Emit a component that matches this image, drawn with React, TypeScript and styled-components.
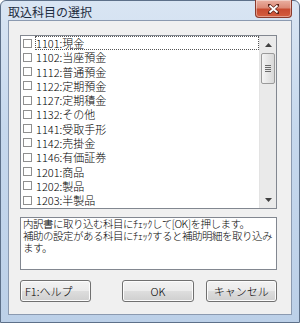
import React from "react";
import styled, { createGlobalStyle } from "styled-components";

const GlobalStyle = createGlobalStyle`
  html, body {
    margin: 0;
    padding: 0;
    background: #ffffff;
  }
  * {
    box-sizing: border-box;
  }
`;

const uiFont = `"Noto Sans CJK JP", sans-serif`;

const Window = styled.div`
  width: 300px;
  height: 323px;
  display: flex;
  flex-direction: column;
  padding: 0 7px 7px;
  border: 1px solid #5d7089;
  border-radius: 6px 6px 0 0;
  background: linear-gradient(180deg, #d9e5f3 0%, #c6d8ed 40%, #bcd0e8 100%);
  font-family: ${uiFont};
  font-size: 11px;
  font-weight: 300;
  color: #000;
`;

const TitleBar = styled.div`
  height: 21px;
  display: flex;
  align-items: flex-start;
  justify-content: space-between;
`;

const Title = styled.div`
  padding: 3px 0 0 0;
  font-size: 12px;
  font-weight: 400;
  line-height: 16px;
  color: #1e2d40;
`;

const CloseButton = styled.div`
  width: 37px;
  height: 18px;
  margin-top: -1px;
  display: flex;
  align-items: center;
  justify-content: center;
  border: 1px solid #8a3a2c;
  border-top: none;
  border-radius: 0 0 4px 4px;
  background: linear-gradient(180deg, #eab0a2 0%, #dc8a77 45%, #c84b31 55%, #d45d3e 100%);
  box-shadow: inset 0 0 0 1px rgba(255, 255, 255, 0.4);
`;

const Client = styled.div`
  flex: 1;
  display: flex;
  flex-direction: column;
  padding: 14px 14px 12px 11px;
  background: #f0f0f0;
  border: 1px solid #8b9ab0;
`;

const ListBox = styled.div`
  height: 174px;
  display: flex;
  background: #fff;
  border: 1px solid #828790;
  overflow: hidden;
`;

const Items = styled.div`
  flex: 1;
  display: flex;
  flex-direction: column;
  overflow: hidden;
`;

const Row = styled.div`
  height: 14.27px;
  flex: none;
  display: flex;
  align-items: center;
  gap: 3px;
  padding-left: 2px;
`;

const Box = styled.span`
  width: 9px;
  height: 9px;
  flex: none;
  border: 1px solid #8f8f8f;
  background: #fff;
`;

const Label = styled.span<{ focused?: boolean }>`
  flex: 1;
  height: 100%;
  display: flex;
  align-items: center;
  padding-left: 1px;
  line-height: 14px;
  white-space: nowrap;
  outline: ${({ focused }) => (focused ? "1px dotted #555" : "none")};
  outline-offset: -1px;
`;

const ScrollBar = styled.div`
  width: 17px;
  flex: none;
  display: flex;
  flex-direction: column;
  background: #eaeaea;
  border-left: 1px solid #e3e3e3;
`;

const Arrow = styled.div`
  height: 17px;
  display: flex;
  align-items: center;
  justify-content: center;
`;

const Track = styled.div`
  flex: 1;
  padding: 0 1px;
`;

const Thumb = styled.div`
  height: 31px;
  display: flex;
  flex-direction: column;
  align-items: center;
  justify-content: center;
  gap: 1px;
  border: 1px solid #9a9a9a;
  border-radius: 2px;
  background: linear-gradient(90deg, #f4f4f4 0%, #e6e6e6 50%, #d8d8d8 100%);
`;

const Grip = styled.span`
  width: 6px;
  height: 1px;
  background: #6a6a6a;
`;

const Note = styled.div`
  height: 53px;
  margin-top: 8px;
  padding: 0 2px;
  background: #fff;
  border: 1px solid #828790;
  font-size: 10.5px;
  line-height: 12px;
  letter-spacing: -0.5px;
  white-space: nowrap;
  overflow: hidden;
`;

const ButtonRow = styled.div`
  display: flex;
  margin-top: 10px;
  gap: 12px;
`;

const Button = styled.button<{ align?: "left" | "center"; push?: boolean }>`
  width: 73px;
  height: 22px;
  margin-left: ${({ push }) => (push ? "19px" : "0")};
  padding: 0 4px;
  display: flex;
  align-items: center;
  justify-content: ${({ align }) => (align === "left" ? "flex-start" : "center")};
  font-family: ${uiFont};
  font-size: 11px;
  font-weight: 300;
  color: #000;
  border: 1px solid #707070;
  border-radius: 3px;
  background: linear-gradient(180deg, #f2f2f2 0%, #ebebeb 48%, #dddddd 52%, #cfcfcf 100%);
  box-shadow: inset 0 0 0 1px #fcfcfc;
`;

const accounts = [
  "1101:現金",
  "1102:当座預金",
  "1112:普通預金",
  "1122:定期預金",
  "1127:定期積金",
  "1132:その他",
  "1141:受取手形",
  "1142:売掛金",
  "1146:有価証券",
  "1201:商品",
  "1202:製品",
  "1203:半製品",
];

function App() {
  return (
    <>
      <GlobalStyle />
      <Window>
        <TitleBar>
          <Title>取込科目の選択</Title>
          <CloseButton>
            <svg width="11" height="10" viewBox="0 0 11 10">
              <path
                d="M1 1 L10 9 M10 1 L1 9"
                stroke="#5a2219"
                strokeWidth="3.2"
                strokeLinecap="square"
              />
              <path
                d="M1.5 1.5 L9.5 8.5 M9.5 1.5 L1.5 8.5"
                stroke="#ffffff"
                strokeWidth="1.8"
              />
            </svg>
          </CloseButton>
        </TitleBar>
        <Client>
          <ListBox>
            <Items>
              {accounts.map((name, i) => (
                <Row key={name}>
                  <Box />
                  <Label focused={i === 0}>{name}</Label>
                </Row>
              ))}
            </Items>
            <ScrollBar>
              <Arrow>
                <svg width="7" height="4" viewBox="0 0 7 4">
                  <path d="M0 4 L3.5 0 L7 4 Z" fill="#404040" />
                </svg>
              </Arrow>
              <Track>
                <Thumb>
                  <Grip />
                  <Grip />
                  <Grip />
                  <Grip />
                </Thumb>
              </Track>
              <Arrow>
                <svg width="7" height="4" viewBox="0 0 7 4">
                  <path d="M0 0 L7 0 L3.5 4 Z" fill="#404040" />
                </svg>
              </Arrow>
            </ScrollBar>
          </ListBox>
          <Note>
            内訳書に取り込む科目にﾁｪｯｸして[OK]を押します。
            <br />
            補助の設定がある科目にﾁｪｯｸすると補助明細を取り込み
            <br />
            ます。
          </Note>
          <ButtonRow>
            <Button align="left">F1:ヘルプ</Button>
            <Button push>OK</Button>
            <Button>キャンセル</Button>
          </ButtonRow>
        </Client>
      </Window>
    </>
  );
}

export default App;
